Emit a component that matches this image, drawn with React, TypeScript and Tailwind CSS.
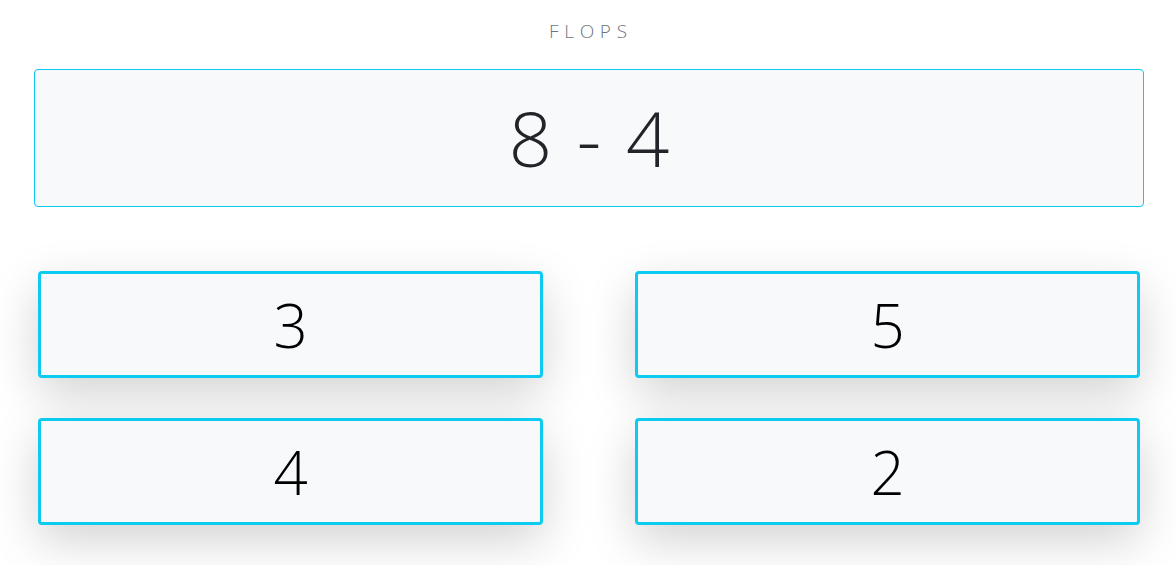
export default function App() {
    const answers = ["3", "5", "4", "2"];
    return (
        <div className="min-h-[565px] w-[1176px] bg-white font-['Open_Sans',sans-serif]">
            <div className="flex h-[69px] items-center justify-center pb-[6px]">
                <h1 className="pl-[0.3em] text-[19px] font-light tracking-[0.3em] text-[#6c757d]">FLOPS</h1>
            </div>
            <div className="ml-[34px] mr-[32px] flex h-[138px] items-center justify-center rounded-[4px] border border-[#0dcaf0] bg-[#f8f9fa]">
                <span className="text-[76px] leading-none font-light text-[#212529] [word-spacing:5px]">8 - 4</span>
            </div>
            <div className="mt-[64px] grid grid-cols-2 gap-x-[92px] gap-y-[40px] pl-[38px] pr-[36px]">
                {answers.map((a) => (
                    <button
                        key={a}
                        className="flex h-[107px] items-center justify-center rounded-[4px] border-[3px] border-[#0dcaf0] bg-[#f8f9fa] shadow-[0_16px_48px_rgba(0,0,0,0.175)]"
                    >
                        <span className="text-[60px] leading-none font-light text-black">{a}</span>
                    </button>
                ))}
            </div>
        </div>
    );
}
